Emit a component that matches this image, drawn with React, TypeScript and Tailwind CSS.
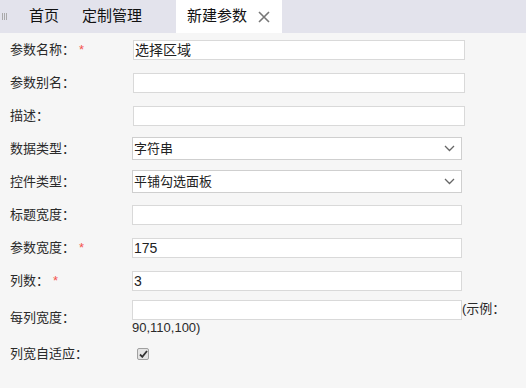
import React from 'react';

const font = { fontFamily: '"Liberation Sans", "Noto Sans CJK SC", sans-serif' };

const Req = () => <span className="ml-[4px] text-[13px] text-[#f4544f]">*</span>;

const Row = ({ label, req, children, tall }: { label: string; req?: boolean; children: React.ReactNode; tall?: boolean }) => (
    <div className={`flex items-center ${tall ? 'h-[40px]' : 'h-[33px]'}`}>
        <div className="w-[132px] pl-[10px] text-[13px] text-[#2a2a2a] leading-none">
            {label}
            {req && <Req />}
        </div>
        <div className="flex-1">{children}</div>
    </div>
);

const TextInput = ({ value, wide }: { value?: string; wide?: boolean }) => (
    <div
        className={`h-[20px] border border-[#d9d9d9] bg-white pl-px text-[14px] leading-[18px] text-[#222] ${wide ? 'ml-[1px] w-[332px]' : 'w-[330px]'}`}
    >
        {value}
    </div>
);

const Select = ({ value }: { value: string }) => (
    <div className="flex h-[23px] w-[330px] items-center justify-between border border-[#cfcfcf] bg-white pl-px pr-[6px] text-[13px] text-[#222]">
        <span>{value}</span>
        <svg width="11" height="7" viewBox="0 0 11 7">
            <polyline points="1,1 5.5,5.5 10,1" fill="none" stroke="#666" strokeWidth="1.3" />
        </svg>
    </div>
);

export default function App() {
    return (
        <div className="h-[388px] w-[526px] bg-[#f6f6f6]" style={font}>
            {/* Tab bar */}
            <div className="flex h-[33px] items-stretch bg-[#e3e3ec] text-[15px] text-[#111]">
                <div className="flex w-[29px] items-center pl-[2px]">
                    <div className="flex gap-[1px]">
                        <span className="h-[7px] w-[1px] bg-[#aaa]" />
                        <span className="h-[7px] w-[1px] bg-[#aaa]" />
                        <span className="h-[7px] w-[1px] bg-[#aaa]" />
                    </div>
                </div>
                <div className="mr-[23px] flex items-center">首页</div>
                <div className="mr-[34px] flex items-center">定制管理</div>
                <div className="flex w-[106px] items-center bg-white pl-[11px]">
                    <span>新建参数</span>
                    <svg className="ml-[11px]" width="12" height="12" viewBox="0 0 12 12">
                        <path d="M1 1 L11 11 M11 1 L1 11" stroke="#777" strokeWidth="1.6" />
                    </svg>
                </div>
            </div>

            {/* Form */}
            <div>
                <Row label="参数名称：" req>
                    <TextInput value="选择区域" wide />
                </Row>
                <Row label="参数别名：">
                    <TextInput wide />
                </Row>
                <Row label="描述：">
                    <TextInput wide />
                </Row>
                <Row label="数据类型：">
                    <Select value="字符串" />
                </Row>
                <Row label="控件类型：">
                    <Select value="平铺勾选面板" />
                </Row>
                <Row label="标题宽度：">
                    <TextInput />
                </Row>
                <Row label="参数宽度：" req>
                    <TextInput value="175" />
                </Row>
                <Row label="列数：" req>
                    <TextInput value="3" />
                </Row>
                <Row label="每列宽度：" tall>
                    <div className="pt-[2px]">
                        <div className="flex items-start">
                            <TextInput />
                            <span className="text-[13px] leading-[18px] text-[#2a2a2a]">(示例：</span>
                        </div>
                        <div className="text-[13px] leading-[16px] text-[#2a2a2a]">90,110,100)</div>
                    </div>
                </Row>
                <Row label="列宽自适应：">
                    <div className="ml-[5px] flex h-[12px] w-[12px] items-center justify-center rounded-[2px] border border-[#a0a0a0] bg-[#e4e4e4]">
                        <svg width="9" height="8" viewBox="0 0 9 8">
                            <path d="M1 4.5 L3.3 6.8 L8 1" fill="none" stroke="#333" strokeWidth="1.8" />
                        </svg>
                    </div>
                </Row>
            </div>
        </div>
    );
}
